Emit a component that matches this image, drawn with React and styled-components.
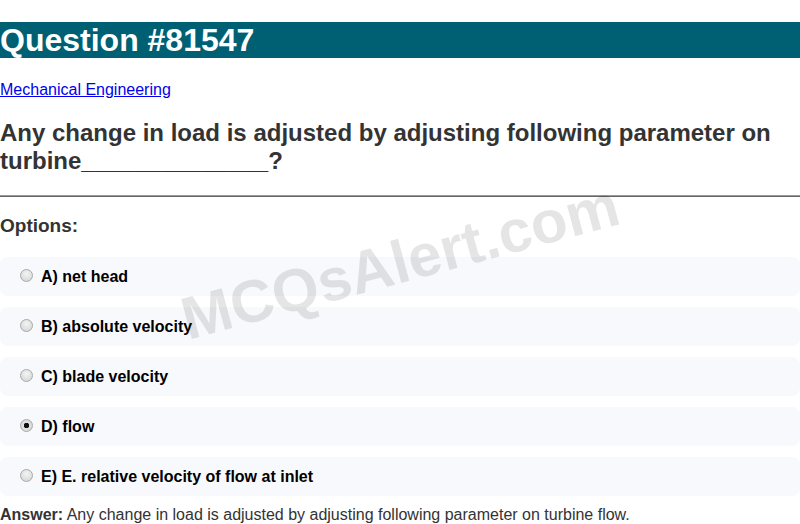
import React from 'react';
import styled, { createGlobalStyle } from 'styled-components';

const GlobalStyle = createGlobalStyle`
  body {
    margin: 0;
    font-family: "Liberation Sans", Arial, sans-serif;
    background: #fff;
  }
`;

const Page = styled.div`
  position: relative;
  overflow: hidden;
`;

const Title = styled.h1`
  margin: 22px 0 23px;
  background: #006073;
  color: #fff;
  font-size: 32px;
  line-height: 36px;
  font-weight: bold;
`;

const Category = styled.p`
  margin: 23px 0 20px;
  font-size: 16px;
  line-height: 18px;
  a {
    color: #0000ee;
  }
`;

const QuestionText = styled.h2`
  margin: 20px 0 20px;
  font-size: 24px;
  line-height: 28px;
  color: #333;
`;

const Divider = styled.hr`
  margin: 0;
  border: 0;
  border-top: 1px solid #9a9a9a;
  border-bottom: 1px solid #666;
`;

const Heading = styled.h3`
  margin: 18px 0 20px;
  font-size: 19px;
  line-height: 22px;
  color: #333;
`;

const OptionList = styled.div`
  display: flex;
  flex-direction: column;
  gap: 11px;
`;

const Option = styled.label`
  display: flex;
  align-items: center;
  height: 39px;
  padding: 0 20px;
  background: #f8f9fc;
  border-radius: 8px;
  font-size: 16px;
  font-weight: bold;
  color: #000;
`;

const Radio = styled.input`
  appearance: none;
  -webkit-appearance: none;
  box-sizing: border-box;
  margin: 0 8px 3px 0;
  width: 13px;
  height: 13px;
  border-radius: 50%;
  border: 1px solid #a9a9a9;
  background: radial-gradient(circle at 50% 35%, #f4f4f4 0%, #dcdcdc 70%, #cfcfcf 100%);
  flex-shrink: 0;
  &:checked {
    background: radial-gradient(circle, #111 0, #111 2.5px, #e2e2e2 3px, #d0d0d0 100%);
  }
`;

const Answer = styled.p`
  margin: 10px 0 0;
  font-size: 16px;
  line-height: 18px;
  color: #333;
  strong {
    color: #333;
  }
`;

const Watermark = styled.div`
  position: absolute;
  left: 400px;
  top: 262px;
  transform: translate(-50%, -50%) rotate(-15deg);
  font-size: 60px;
  font-weight: bold;
  color: rgba(0, 0, 0, 0.1);
  white-space: nowrap;
  pointer-events: none;
`;

const options = [
  'A) net head',
  'B) absolute velocity',
  'C) blade velocity',
  'D) flow',
  'E) E. relative velocity of flow at inlet',
];

export default function App() {
  return (
    <Page>
      <GlobalStyle />
      <Title>Question #81547</Title>
      <Category>
        <a href="#">Mechanical Engineering</a>
      </Category>
      <QuestionText>
        Any change in load is adjusted by adjusting following parameter on turbine______________?
      </QuestionText>
      <Divider />
      <Heading>Options:</Heading>
      <OptionList>
        {options.map((text, i) => (
          <Option key={text}>
            <Radio type="radio" name="opt" defaultChecked={i === 3} />
            {text}
          </Option>
        ))}
      </OptionList>
      <Answer>
        <strong>Answer:</strong> Any change in load is adjusted by adjusting following parameter on turbine flow.
      </Answer>
      <Watermark>MCQsAlert.com</Watermark>
    </Page>
  );
}
